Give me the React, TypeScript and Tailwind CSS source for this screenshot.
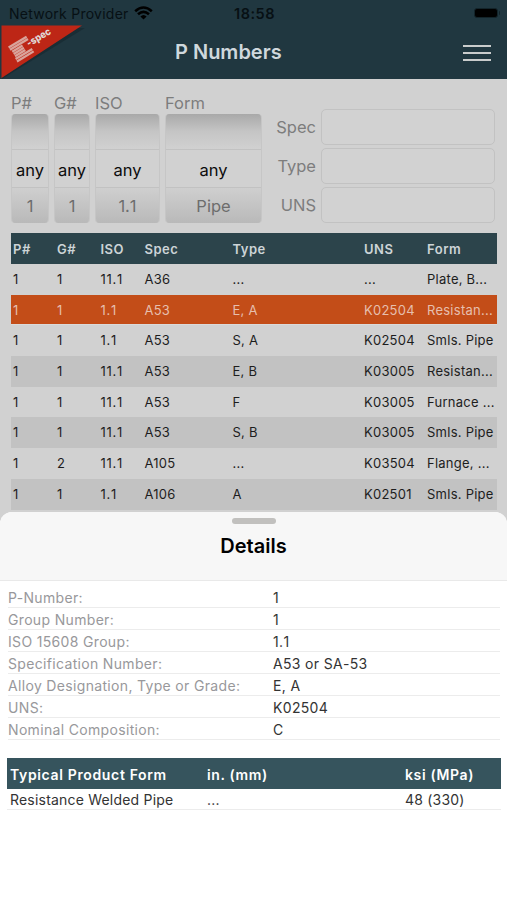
import { Fragment } from 'react';
import { clsx } from 'clsx';

interface Material {
  p: string;
  g: string;
  iso: string;
  spec: string;
  type: string;
  uns: string;
  form: string;
}

const materials: Material[] = [
  { p: '1', g: '1', iso: '11.1', spec: 'A36', type: '...', uns: '...', form: 'Plate, B...' },
  { p: '1', g: '1', iso: '1.1', spec: 'A53', type: 'E, A', uns: 'K02504', form: 'Resistan...' },
  { p: '1', g: '1', iso: '1.1', spec: 'A53', type: 'S, A', uns: 'K02504', form: 'Smls. Pipe' },
  { p: '1', g: '1', iso: '11.1', spec: 'A53', type: 'E, B', uns: 'K03005', form: 'Resistan...' },
  { p: '1', g: '1', iso: '11.1', spec: 'A53', type: 'F', uns: 'K03005', form: 'Furnace ...' },
  { p: '1', g: '1', iso: '11.1', spec: 'A53', type: 'S, B', uns: 'K03005', form: 'Smls. Pipe' },
  { p: '1', g: '2', iso: '11.1', spec: 'A105', type: '...', uns: 'K03504', form: 'Flange, ...' },
  { p: '1', g: '1', iso: '1.1', spec: 'A106', type: 'A', uns: 'K02501', form: 'Smls. Pipe' },
];

const details = [
  ['P-Number:', '1'],
  ['Group Number:', '1'],
  ['ISO 15608 Group:', '1.1'],
  ['Specification Number:', 'A53 or SA-53'],
  ['Alloy Designation, Type or Grade:', 'E, A'],
  ['UNS:', 'K02504'],
  ['Nominal Composition:', 'C'],
];

const columns = 'grid grid-cols-[44px_43.5px_44px_88px_131.5px_63px_1fr] items-center pl-[2px]';

function Logo() {
  return (
    <svg className="block h-[54px] w-[86px] overflow-visible" viewBox="0 25 86 54">
      <path d="M2 28 L85 28 L2 79 Z" fill="#172a31" opacity="0.7" />
      <path d="M1.5 25.5 H82 L1.5 78 Z" fill="#bd2616" />
      <g transform="translate(8 46.5) rotate(-31)" stroke="#d9a39b" strokeWidth="2.3">
        <path d="M0 1.2 H21 M0 3.9 H21" />
        <path d="M1 6.6 H13 M1 9.3 H13 M1 12 H13" />
        <path d="M0 14.7 H19.5 M0 17.4 H19.5" />
      </g>
      <text
        transform="translate(29 47) rotate(-31)"
        fill="#e0d8d7"
        fontSize="10"
        fontWeight="800"
        fontFamily="Inter, sans-serif"
        textLength="26.5"
        lengthAdjust="spacingAndGlyphs"
      >
        -spec
      </text>
    </svg>
  );
}

function StatusBar() {
  return (
    <div className="grid h-[25px] grid-cols-3 items-center pr-[7px] pl-[9px] pt-[2px] text-[14px] text-[#071014]">
      <div className="flex items-center gap-[5px] whitespace-nowrap">
        <span className="tracking-[0.25px]">Network Provider</span>
        <svg className="-mt-[2px] h-[14px] w-[19px]" viewBox="0 0 19 14" fill="none" stroke="#000" strokeWidth="2.6">
          <path d="M1.2 5.2 Q9.5 -2.2 17.8 5.2" />
          <path d="M4 8.3 Q9.5 3.4 15 8.3" />
          <path d="M6.4 10.6 Q9.5 7.6 12.6 10.6 L9.5 13.6 Z" fill="#000" stroke="none" />
        </svg>
      </div>
      <span className="text-center text-[14.5px] font-semibold tracking-[0.5px]">18:58</span>
      <div className="-mt-[2px] flex items-center justify-end gap-px">
        <span className="h-[10px] w-[24px] rounded-[3px] border border-[#13242a] bg-black" />
        <span className="h-1 w-px rounded-r bg-[#13242a]" />
      </div>
    </div>
  );
}

function Picker({ label, next, width }: { label: string; next: string; width: string }) {
  return (
    <div className={width}>
      <div className="h-[21px] text-[16.5px] leading-[20px] text-[#7d7d7d]">{label}</div>
      <div className="flex h-[109px] flex-col overflow-hidden rounded-[4px] border-x border-[#c6c6c6] text-center text-[16.5px]">
        <div className="h-[36px] border-b border-[#c2c2c2] bg-linear-to-b from-[#a9a9a9] via-[#c5c5c5] to-[#d1d1d1]" />
        <div className="h-[37px] leading-[40px] text-[#0c0c0c]">any</div>
        <div className="h-[36px] border-t border-[#c2c2c2] bg-linear-to-b from-[#cfcfcf] to-[#b9b9b9] leading-[37px] text-[#6d6d6d] [font-kerning:none]">
          {next}
        </div>
      </div>
    </div>
  );
}

function Filters() {
  return (
    <div className="flex h-[154px] pt-[14px] pl-[11px]">
      <div className="flex gap-[5px]">
        <Picker label="P#" next="1" width="w-[38px]" />
        <Picker label="G#" next="1" width="w-[36px]" />
        <Picker label="ISO" next="1.1" width="w-[65px]" />
        <Picker label="Form" next="Pipe" width="w-[97px]" />
      </div>
      <div className="ml-[6px] grid auto-rows-[36px] grid-cols-[48px_174px] items-center gap-x-[5px] gap-y-[3px] pt-[16px]">
        {['Spec', 'Type', 'UNS'].map((name) => (
          <Fragment key={name}>
            <label className="text-right text-[16.5px] text-[#7d7d7d]">{name}</label>
            <div className="h-full rounded-[5px] border border-[#c2c2c2] bg-[#d2d2d2]" />
          </Fragment>
        ))}
      </div>
    </div>
  );
}

function MaterialsTable() {
  return (
    <div className="mr-[10px] ml-[11px] text-[13px] tracking-[0.25px]">
      <div className={clsx(columns, 'h-[31px] bg-[#2c444b] pt-[2px] font-semibold tracking-[0.5px] text-[#ccd4d7]')}>
        <span>P#</span>
        <span>G#</span>
        <span>ISO</span>
        <span>Spec</span>
        <span>Type</span>
        <span>UNS</span>
        <span>Form</span>
      </div>
      {materials.map((row, i) => (
        <div
          key={i}
          className={clsx(
            columns,
            'h-[30.7px] whitespace-nowrap',
            i === 1 ? 'border-b border-[#dadada] bg-[#c34d18] pt-[2px] text-[#e6bfae]' : 'text-[#1d1d1d]',
            i === 2 && 'pt-px',
            i !== 1 && i % 2 === 1 && 'bg-[#c2c2c2]',
            i > 2 && 'pt-[0.5px]',
          )}
        >
          <span>{row.p}</span>
          <span>{row.g}</span>
          <span className="tracking-[0.7px] [font-kerning:none]">{row.iso}</span>
          <span>{row.spec}</span>
          <span>{row.type}</span>
          <span>{row.uns}</span>
          <span>{row.form}</span>
        </div>
      ))}
    </div>
  );
}

function DetailsSheet() {
  return (
    <div className="absolute inset-x-0 bottom-0 h-[388px] overflow-hidden rounded-t-[12px] bg-white">
      <div className="flex h-[69px] flex-col items-center border-b border-[#e9e9e9] bg-[#f7f7f7] pt-[6px]">
        <div className="h-[6px] w-[44px] rounded-full bg-[#c1c0be]" />
        <h2 className="mt-[8px] text-[20px] leading-[28px] font-semibold text-black">Details</h2>
      </div>

      <div className="mr-[7px] ml-[8px] pt-[5px] text-[14px] tracking-[0.33px]">
        {details.map(([label, value]) => (
          <div key={label} className="grid h-[22px] grid-cols-[265px_1fr] items-center border-b border-[#ececec] pt-px">
            <span className="text-[#98989b]">{label}</span>
            <span className="text-[#333] [font-kerning:none]">{value}</span>
          </div>
        ))}
      </div>

      <div className="mt-[18px] mr-[6px] ml-[7px] text-[14px] tracking-[0.2px]">
        <div className="grid h-[31px] grid-cols-[197px_198px_1fr] items-center bg-[#36545d] pt-px pl-[3px] font-semibold tracking-[0.65px] text-white">
          <span>Typical Product Form</span>
          <span>in. (mm)</span>
          <span>ksi (MPa)</span>
        </div>
        <div className="grid h-[21px] grid-cols-[197px_198px_1fr] items-center border-b border-[#ececec] pl-[3px] text-[#333]">
          <span>Resistance Welded Pipe</span>
          <span>...</span>
          <span>48 (330)</span>
        </div>
      </div>
    </div>
  );
}

export default function App() {
  return (
    <div className="relative h-[900px] w-[507px] overflow-hidden bg-[#d1d1d1] font-['Inter',sans-serif]">
      <header className="h-[79px] bg-[#203740]">
        <StatusBar />
        <div className="flex h-[54px] items-center pr-[16px]">
          <Logo />
          <h1 className="ml-[89px] text-[20px] font-semibold text-[#cfd8dd]">P Numbers</h1>
          <button className="mt-[2px] ml-auto flex w-[28px] flex-col gap-[5px]">
            <span className="h-[2px] w-full bg-[#c9cccc]" />
            <span className="h-[2px] w-full bg-[#c9cccc]" />
            <span className="h-[2px] w-full bg-[#c9cccc]" />
          </button>
        </div>
      </header>
      <Filters />
      <MaterialsTable />
      <DetailsSheet />
    </div>
  );
}
